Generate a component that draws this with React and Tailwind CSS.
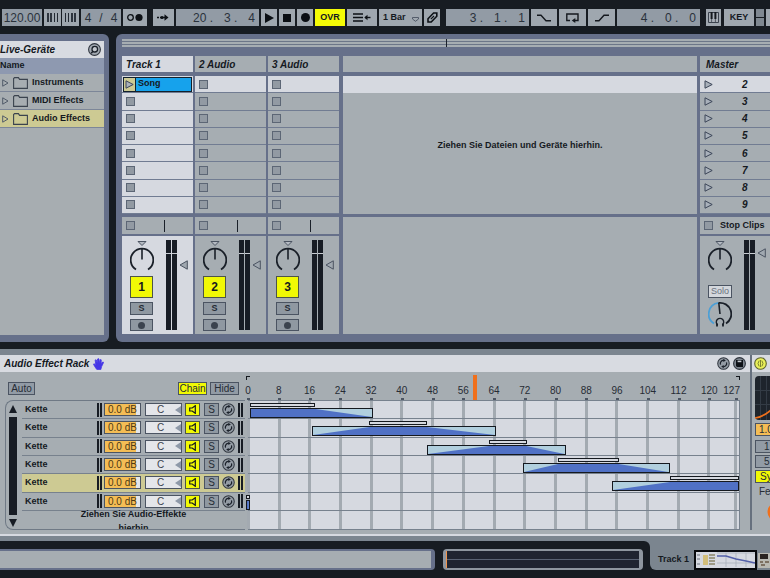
import { useState } from "react";

const devices = ["Instruments", "MIDI Effects", "Audio Effects"];
const tracks = [
  { id: 1, name: "Track 1" },
  { id: 2, name: "2 Audio" },
  { id: 3, name: "3 Audio" },
];
const scenes = [2, 3, 4, 5, 6, 7, 8, 9];

// start / end of the zone, fadeIn / fadeOut are the inner edges of the full level part
const chains = [
  { start: 0.4, fadeIn: 0.4, fadeOut: 17.5, end: 32.5 },
  { start: 16.6, fadeIn: 31.5, fadeOut: 46.6, end: 64.7 },
  { start: 46.7, fadeIn: 62.8, fadeOut: 72.7, end: 82.8 },
  { start: 71.8, fadeIn: 80.8, fadeOut: 96.8, end: 109.9 },
  { start: 94.8, fadeIn: 109.9, fadeOut: 128, end: 128, selected: true },
  { start: -0.5, fadeIn: -0.5, fadeOut: 0.5, end: 0.5 },
];
const ticks = [0, 8, 16, 24, 32, 40, 48, 56, 64, 72, 80, 88, 96, 104, 112, 120, 127];

const pct = (v) => `${(v / 128) * 100}%`;

const Cell = ({ label, className = "", children }) => (
  <button
    aria-label={label}
    className={`h-[17px] shrink-0 flex items-center justify-center bg-[#9fa7af] text-[#15191f] ${className}`}
  >
    {children}
  </button>
);

const Position = ({ label, parts, className = "" }) => (
  <div
    role="group"
    aria-label={label}
    className={`h-[17px] w-[83px] shrink-0 flex items-center justify-end gap-[11px] pr-1 bg-[#929ba5] text-[12px] text-[#2a323c] ${className}`}
  >
    {parts.map((p, i) => (
      <span key={i} className="whitespace-pre">{p}</span>
    ))}
  </div>
);

const StopSquare = () => (
  <button aria-label="Stop" className="block w-[9px] h-[9px] shrink-0 border border-[#5c6675] bg-[#929aa3]"></button>
);

const Launch = () => (
  <svg width="9" height="9" viewBox="0 0 9 9" className="shrink-0">
    <path d="M1 .8 8.2 4.5 1 8.2Z" fill="#a9b1bb" stroke="#3c4658" />
  </svg>
);

const Folder = () => (
  <svg width="15" height="12" viewBox="0 0 15 12" className="shrink-0">
    <path d="M.6 11.4V1.6L1.6.6H5.4L6.6 2.4H14.4V11.4Z" fill="none" stroke="#3b434e" strokeWidth="1.1" />
  </svg>
);

const PanKnob = () => (
  <svg width="24" height="32" viewBox="0 0 24 32" className="block">
    <path d="M8 1.5H16L12 5.5Z" fill="#b4bac2" stroke="#4b5462" />
    <path d="M6 29.5A11.3 11.3 0 1 1 18 29.5" fill="none" stroke="#1a2029" strokeWidth="1.8" />
    <path d="M12 8V19.5" stroke="#1a2029" strokeWidth="1.6" />
  </svg>
);

const CueKnob = () => (
  <svg width="24" height="29" viewBox="0 0 24 29" className="block">
    <path d="M6 23.5A11.2 11.2 0 0 1 10.5 2.9" fill="none" stroke="#4c9fd6" strokeWidth="1.8" />
    <path d="M10.5 2.9A11.2 11.2 0 0 1 18 23.5" fill="none" stroke="#1a2029" strokeWidth="1.8" />
    <path d="M10.8 3 12 14" stroke="#1a2029" strokeWidth="1.6" />
    <path d="M9.7 25A3.7 3.7 0 1 1 14.3 25" fill="none" stroke="#1a2029" strokeWidth="1.4" />
    <path d="M9 23.5V26.5M15 23.5V26.5" stroke="#1a2029" strokeWidth="1.8" />
  </svg>
);

const Meter = () => (
  <div className="flex gap-px h-[90px]">
    {[0, 1].map((m) => (
      <div key={m} className="w-[5px] bg-[#171c24] pt-[13px]">
        <div className="h-px bg-[#c9cdd3]"></div>
      </div>
    ))}
  </div>
);

const Volume = () => (
  <svg width="9" height="10" viewBox="0 0 9 10" className="block">
    <path d="M8.3 .8V9.2L1 5Z" fill="#a0a8b0" stroke="#4b5462" />
  </svg>
);

const HotSwap = ({ size = 13 }) => (
  <svg width={size} height={size} viewBox="0 0 14 14" className="shrink-0">
    <circle cx="7" cy="7" r="6.2" fill="#939ba4" stroke="#30363f" strokeWidth="1.1" />
    <path d="M3.8 8.2A3.3 3.3 0 0 1 7.4 3.7M10.2 5.8A3.3 3.3 0 0 1 6.6 10.3" fill="none" stroke="#1a2029" strokeWidth="1.3" />
    <path d="M6.8 2 9.5 3.8 6.8 5.4ZM7.2 8.6 4.5 10.2 7.2 12Z" fill="#1a2029" />
  </svg>
);

const Transport = () => (
  <header className="flex items-start h-[34px] pt-[9px] pl-[2px] overflow-hidden">
    <input
      aria-label="Tempo"
      defaultValue="120.00"
      className="h-[17px] w-[40px] shrink-0 bg-[#929ba5] text-center text-[12px] text-[#2a323c] outline-none"
    />
    <Cell label="Nudge down" className="ml-[2px] w-[17px]">
      <svg width="11" height="9" viewBox="0 0 11 9"><path d="M1 0V9M4 0V9" stroke="#222932" strokeWidth="1.8" /><path d="M7.5 0V9M10.5 0V9" stroke="#222932" /></svg>
    </Cell>
    <Cell label="Nudge up" className="ml-px w-[17px]">
      <svg width="11" height="9" viewBox="0 0 11 9"><path d="M.5 0V9M3.5 0V9" stroke="#222932" /><path d="M7 0V9M10 0V9" stroke="#222932" strokeWidth="1.8" /></svg>
    </Cell>
    <div className="ml-[2px] w-[40px] h-[17px] shrink-0 flex items-center justify-center gap-2 bg-[#929ba5] text-[12px] text-[#2a323c]">
      <span>4</span><span>/</span><span>4</span>
    </div>
    <Cell label="Metronome" className="ml-[2px] w-[24px]">
      <svg width="18" height="9" viewBox="0 0 18 9"><circle cx="4.5" cy="4.5" r="2.8" fill="none" stroke="#0d1116" strokeWidth="1.3" /><circle cx="13" cy="4.5" r="3.6" fill="#0d1116" /></svg>
    </Cell>
    <Cell label="Follow" className="ml-[6px] w-[21px]">
      <svg width="13" height="7" viewBox="0 0 13 7"><path d="M0 3.5H2M3 3.5H9" stroke="#0d1116" strokeWidth="1.4" /><circle cx="5" cy="3.5" r="1.6" fill="#0d1116" /><path d="M7.5 .3 11.5 3.5 7.5 6.7Z" fill="#0d1116" /></svg>
    </Cell>
    <Position label="Arrangement position" parts={["20 .", "3 .", "4"]} className="ml-[2px]" />
    <Cell label="Play" className="ml-[2px] w-[16px]">
      <svg width="9" height="10" viewBox="0 0 9 10"><path d="M0 0 9 5 0 10Z" fill="#0b0f14" /></svg>
    </Cell>
    <Cell label="Stop" className="ml-[2px] w-[16px]">
      <span className="w-2 h-2 bg-[#0b0f14]"></span>
    </Cell>
    <Cell label="Record" className="ml-[2px] w-[16px]">
      <span className="w-[9px] h-[9px] rounded-full bg-[#0b0f14]"></span>
    </Cell>
    <button className="ml-[2px] w-[30px] h-[17px] shrink-0 bg-[#f4fb06] text-[9px] font-bold">OVR</button>
    <Cell label="Back to arrangement" className="ml-[2px] w-[30px]">
      <svg width="18" height="9" viewBox="0 0 18 9"><path d="M0 1H10M0 4.5H10M0 8H10" stroke="#0d1116" strokeWidth="1.6" /><path d="M12 4.5H17.5" stroke="#0d1116" strokeWidth="1.4" /><path d="M14.5 1.8 11.3 4.5 14.5 7.2Z" fill="#0d1116" /></svg>
    </Cell>
    <div className="ml-[2px] w-[43px] h-[17px] shrink-0 flex items-center bg-[#9fa7af]">
      <select
        aria-label="Quantization"
        defaultValue="1 Bar"
        className="appearance-none min-w-0 flex-1 h-full pl-1 text-[9px] font-bold text-[#15191f] outline-none"
      >
        <option>1 Bar</option>
        <option>2 Bars</option>
      </select>
      <svg width="7" height="5" viewBox="0 0 7 5" className="mr-[3px] mt-1"><path d="M.5 .5H6.5V2L3.5 4.3 .5 2Z" fill="none" stroke="#4b5462" strokeWidth=".9" /></svg>
    </div>
    <Cell label="Draw mode" className="ml-[2px] w-[16px]">
      <svg width="11" height="11" viewBox="0 0 11 11"><path d="M1 10V6.8L6.6 1H9.8V4.2L4.2 10Z" fill="none" stroke="#0d1116" strokeWidth="1.6" /><path d="M3.8 7.2 7 4" stroke="#0d1116" strokeWidth="1.1" /></svg>
    </Cell>
    <Position label="Loop start" parts={["3 .", "1 .", "1"]} className="ml-[6px]" />
    <Cell label="Punch in" className="ml-[2px] w-[26px]">
      <svg width="14" height="8" viewBox="0 0 14 8"><path d="M0 1.2H4L9 6.8H14" fill="none" stroke="#15191f" strokeWidth="1.4" /></svg>
    </Cell>
    <Cell label="Loop" className="ml-[2px] w-[27px]">
      <svg width="13" height="10" viewBox="0 0 13 10"><path d="M4 7.5H.8V1H12V7.5H8" fill="none" stroke="#15191f" strokeWidth="1.4" /><path d="M9.3 5 5.8 7.5 9.3 10Z" fill="#15191f" /></svg>
    </Cell>
    <Cell label="Punch out" className="ml-[2px] w-[27px]">
      <svg width="14" height="8" viewBox="0 0 14 8"><path d="M0 6.8H4L9 1.2H14" fill="none" stroke="#15191f" strokeWidth="1.4" /></svg>
    </Cell>
    <Position label="Loop length" parts={["4 .", "0 .", "0"]} className="ml-[2px]" />
    <Cell label="Computer keyboard" className="ml-[6px] w-[15px]">
      <svg width="11" height="11" viewBox="0 0 11 11"><path d="M.5 .5H10.5V10.5H.5Z" fill="#a9b0b8" stroke="#3b434e" /><path d="M3.6 0V7M7.4 0V7" stroke="#15191f" strokeWidth="2" /><path d="M3.6 7V10.5M7.4 7V10.5" stroke="#3b434e" strokeWidth=".8" /></svg>
    </Cell>
    <Cell className="ml-[3px] w-[30px] text-[9px] font-bold">KEY</Cell>
    <div className="ml-[2px] shrink-0 flex flex-col gap-px">
      <span className="w-2 h-2 bg-[#7f8891]"></span>
      <span className="w-2 h-2 bg-[#7f8891]"></span>
    </div>
    <Cell label="MIDI" className="ml-[2px] w-[30px]" />
  </header>
);

const Browser = () => {
  const [selected, setSelected] = useState("Audio Effects");
  return (
    <aside className="w-[109px] shrink-0 flex flex-col pt-[7px] pr-[5px] pb-[7px] bg-[#66708a] rounded-r-md">
      <div className="h-[17px] flex items-center justify-between pr-[3px] bg-[#d8dbe1]">
        <h2 className="text-[10px] font-bold italic">Live-Geräte</h2>
        <svg width="13" height="13" viewBox="0 0 13 13">
          <circle cx="6.5" cy="6.5" r="5.9" fill="#a4abb3" stroke="#30363f" strokeWidth="1.1" />
          <circle cx="6.8" cy="6.2" r="2.8" fill="#c4c8ce" stroke="#1a2029" strokeWidth="1.3" />
          <path d="M5 8.3 3.2 10.2" stroke="#1a2029" strokeWidth="1.5" />
        </svg>
      </div>
      <div className="h-[16px] flex items-center bg-[#8e99b0] text-[9px] font-bold">Name</div>
      <ul className="flex-1 bg-[#a7adb1]">
        {devices.map((d) => (
          <li key={d}>
            <button
              onClick={() => setSelected(d)}
              className={`w-full h-[18px] flex items-center border-b border-[#7c8698] pl-[2px] text-[9px] font-bold ${
                d === selected ? "bg-[#cdca93]" : ""
              }`}
            >
              <svg width="7" height="8" viewBox="0 0 7 8" className="mr-1"><path d="M.7 .8 6 4 .7 7.2Z" fill="none" stroke="#515b69" /></svg>
              <Folder />
              <span className="ml-1">{d}</span>
            </button>
          </li>
        ))}
      </ul>
    </aside>
  );
};

const Track = ({ track }) => {
  const first = track.id === 1;
  return (
    <section aria-label={track.name} className="w-[71px] shrink-0 flex flex-col">
      <h3 className={`h-[16px] flex items-center pl-1 mb-1 text-[10px] font-bold italic ${first ? "bg-[#d6d9e0]" : "bg-[#a6adb2]"}`}>
        {track.name}
      </h3>
      <div className="h-[138px] flex flex-col">
        {scenes.map((s, i) => (
          <div
            key={s}
            className={`flex-1 flex items-center border-b border-[#717c92] ${first || i === 0 ? "bg-[#d6d9e0]" : "bg-[#a6adb2]"}`}
          >
            {first && i === 0 ? (
              <button className="flex-1 h-[15px] mx-px flex items-center border border-[#12202c] bg-[#16a2ec] text-[9px] font-bold">
                <span className="w-3 h-full flex items-center justify-center bg-[#cdca93] border-r border-[#12202c]">
                  <Launch />
                </span>
                <span className="pl-[2px]">Song</span>
              </button>
            ) : (
              <div className="pl-1"><StopSquare /></div>
            )}
          </div>
        ))}
      </div>
      <div className="h-[17px] mt-[3px] mb-[2px] flex items-center pl-1 bg-[#a6adb2]">
        <StopSquare />
        <span className="ml-[29px] w-px h-3 bg-[#1a2029]"></span>
      </div>
      <div className={`h-[98px] flex items-start pt-1 pl-2 ${first ? "bg-[#d6d9e0]" : "bg-[#a6adb2]"}`}>
        <div className="w-6 flex flex-col gap-1">
          <PanKnob />
          <button className="w-[23px] h-[22px] border border-[#4d5548] bg-[#f1f905] text-[12px] font-bold leading-5">{track.id}</button>
          <button className="w-[23px] h-[13px] border border-[#4b5462] bg-[#8f98a1] text-[9px] font-bold leading-[11px] text-[#262c35]">S</button>
          <button aria-label="Arm" className="w-[23px] h-[12px] flex items-center justify-center border border-[#4b5462] bg-[#8f98a1]">
            <span className="w-[7px] h-[7px] rounded-full bg-[#3b434e]"></span>
          </button>
        </div>
        <div className="ml-3"><Meter /></div>
        <div className="ml-[2px] mt-5"><Volume /></div>
      </div>
    </section>
  );
};

const Master = () => (
  <section aria-label="Master" className="w-[70px] shrink-0 flex flex-col">
    <h3 className="h-[16px] flex items-center pl-[6px] mb-1 bg-[#a6adb2] text-[10px] font-bold italic">Master</h3>
    <div className="h-[138px] flex flex-col">
      {scenes.map((s, i) => (
        <button
          key={s}
          className={`flex-1 flex items-center pl-1 border-b border-[#717c92] text-[10px] font-bold italic ${i === 0 ? "bg-[#d6d9e0]" : "bg-[#a6adb2]"}`}
        >
          <Launch />
          <span className="ml-[29px]">{s}</span>
        </button>
      ))}
    </div>
    <div className="h-[17px] mt-[3px] mb-[2px] flex items-center pl-1 bg-[#a6adb2]">
      <StopSquare />
      <span className="ml-[7px] text-[9px] font-bold whitespace-nowrap">Stop Clips</span>
    </div>
    <div className="h-[98px] flex items-start pt-1 pl-2 bg-[#a6adb2]">
      <div className="w-6">
        <PanKnob />
        <button className="mt-[13px] mb-[2px] w-6 h-[13px] flex items-center justify-center border border-[#4b5462] bg-[#d3d7dc] text-[9px] text-[#69717c]">Solo</button>
        <CueKnob />
      </div>
      <div className="ml-3"><Meter /></div>
      <div className="ml-[2px] mt-2"><Volume /></div>
    </div>
  </section>
);

const Session = () => (
  <main className="flex-1 min-w-0 pt-[5px] pb-2 pl-[6px] bg-[#66708a] rounded-l-md overflow-hidden">
    <div className="h-2 mb-[9px] flex flex-col justify-between relative bg-[#a6adb2]">
      <div className="h-px mt-[2px] bg-[#6c7688]"></div>
      <div className="h-px mb-[2px] bg-[#6c7688]"></div>
      <span className="absolute left-1/2 top-0 w-px h-2 bg-[#1a2029]"></span>
    </div>
    <div className="flex gap-[2px]">
      {tracks.map((t) => (
        <Track key={t.id} track={t} />
      ))}
      <div className="flex-1 min-w-0 flex flex-col pl-[2px] pr-px">
        <div className="h-[16px] mb-1 bg-[#a6adb2]"></div>
        <div className="h-[17px] bg-[#d6d9e0]"></div>
        <div className="h-[121px] pt-[46px] bg-[#a6adb2] text-center text-[9px] font-bold">
          Ziehen Sie Dateien und Geräte hierhin.
        </div>
        <div className="flex-1 mt-[3px] bg-[#a6adb2]"></div>
      </div>
      <Master />
    </div>
  </main>
);

const MiniMeter = () => (
  <span className="flex gap-px h-[14px] shrink-0">
    <span className="w-[2px] bg-[#171c24]"></span>
    <span className="w-[2px] bg-[#171c24]"></span>
  </span>
);

const ChainRow = ({ chain }) => (
  <div className={`flex-1 flex items-center pl-[3px] border-b border-[#77818d] text-[9px] ${chain.selected ? "bg-[#cdca93]" : ""}`}>
    <span className="w-[72px] font-bold">Kette</span>
    <MiniMeter />
    <input
      aria-label="Chain volume"
      defaultValue="0.0 dB"
      className="ml-[2px] w-[37px] h-[13px] border border-[#4b5462] bg-linear-to-r from-[#f4bd55] from-88% to-[#e4e6ea] to-88% text-center text-[10px] text-[#4d3a16] outline-none"
    />
    <span className="ml-1 w-[37px] h-[13px] flex items-center border border-[#4b5462] bg-[#e4e6ea]">
      <input aria-label="Chain pan" defaultValue="C" className="min-w-0 flex-1 text-center text-[10px] text-[#3b434e] outline-none" />
      <svg width="6" height="8" viewBox="0 0 6 8"><path d="M6 0V8L0 4Z" fill="#8e99a8" /></svg>
    </span>
    <button aria-label="Chain activator" className="ml-[3px] w-[15px] h-[13px] flex items-center justify-center border border-[#4d5548] bg-[#f1f905]">
      <svg width="8" height="9" viewBox="0 0 8 9"><path d="M.7 3H3.2L6.3 .7V8.3L3.2 6H.7Z" fill="none" stroke="#15191f" strokeWidth="1.2" /></svg>
    </button>
    <button className="ml-1 w-[15px] h-[13px] border border-[#4b5462] bg-[#8f98a1] text-[10px] leading-[11px] text-[#262c35]">S</button>
    <button aria-label="Hot-swap" className="ml-[3px]"><HotSwap /></button>
    <span className="ml-[3px]"><MiniMeter /></span>
  </div>
);

const ZoneBar = ({ chain }) => {
  const { start, end, fadeIn, fadeOut } = chain;
  return (
    <div className="flex-1 relative border-b border-[#77818d]">
      <div
        className="absolute top-[2px] h-1 border border-[#15191f] bg-[#d6d9e0]"
        style={{ left: pct(fadeIn), width: pct(fadeOut - fadeIn) }}
      ></div>
      <div
        className="absolute top-[7px] h-[10px] border border-[#15191f] bg-[#b1cfde]"
        style={{ left: pct(start), width: pct(end - start) }}
      >
        <svg className="block w-full h-full" viewBox={`0 0 ${end - start} 10`} preserveAspectRatio="none">
          <path
            d={`M0 10 L${fadeIn - start} 0 H${fadeOut - start} L${end - start} 10 Z`}
            fill="#5071c5"
          />
        </svg>
      </div>
    </div>
  );
};

const Rack = () => {
  const [view, setView] = useState("Chain");
  return (
    <section aria-label="Audio Effect Rack" className="flex-1 min-w-0 bg-[#a6adb2]">
      <div className="h-[17px] flex items-center pl-1 pr-1 bg-[#d8dbe1]">
        <h2 className="text-[10px] font-bold italic">Audio Effect Rack</h2>
        <svg width="11" height="12" viewBox="0 0 11 12" className="ml-[4px]">
          <path d="M3.2 10.8 1 7.2Q0 5.6 1.2 5.8L2.8 7.2 2.2 2.3Q2.4 1.2 3.3 2L4.2 5 4.6 1Q5.2 0 6 1L6.2 5 7.2 1.8Q8.2 1 8.3 2.2L8 5.6 9.6 4Q11 3.8 10.3 5L8.6 8.6 7.8 11.6H4Z" fill="#4637e6" stroke="#4637e6" strokeWidth=".8" />
        </svg>
        <span className="flex-1"></span>
        <button aria-label="Hot-swap preset" className="mr-[3px]"><HotSwap /></button>
        <button aria-label="Save preset">
          <svg width="13" height="13" viewBox="0 0 13 13" className="block">
            <circle cx="6.5" cy="6.5" r="5.9" fill="#7d858e" stroke="#30363f" strokeWidth="1.1" />
            <path d="M3 3H10V10H4L3 9Z" fill="#0d1116" />
            <path d="M4.6 3.6H8.4V5.2H4.6Z" fill="#c4c8ce" />
          </svg>
        </button>
      </div>
      <div className="flex pl-[5px] pr-[10px]">
        <div className="w-[240px] shrink-0">
          <div className="h-[28px] flex items-center pl-[3px] pt-[5px] pr-[6px] text-[10px]">
            <button className="w-[27px] h-[13px] flex items-center justify-center border border-[#4b5462] bg-[#929ba5] text-[#262c35]">Auto</button>
            <span className="flex-1"></span>
            <button
              onClick={() => setView("Chain")}
              className={`w-[29px] h-[13px] mr-[3px] flex items-center justify-center border border-[#4b5462] text-[#262c35] ${view === "Chain" ? "bg-[#f1f905]" : "bg-[#929ba5]"}`}
            >
              Chain
            </button>
            <button
              onClick={() => setView("Hide")}
              className={`w-[29px] h-[13px] flex items-center justify-center border border-[#4b5462] text-[#262c35] ${view === "Hide" ? "bg-[#f1f905]" : "bg-[#929ba5]"}`}
            >
              Hide
            </button>
          </div>
          <div className="h-[130px] flex border border-r-0 border-[#6f7985] rounded-l-lg overflow-hidden">
            <div className="w-4 shrink-0 flex flex-col items-center pt-1 pb-[2px] pr-[2px] gap-1">
              <svg width="8" height="8" viewBox="0 0 8 8"><path d="M4 0 8 8H0Z" fill="#171c24" /></svg>
              <div className="w-2 flex-1 bg-[#171c24]"></div>
              <svg width="8" height="8" viewBox="0 0 8 8"><path d="M0 0H8L4 8Z" fill="#171c24" /></svg>
            </div>
            <div className="flex-1 min-w-0">
              <div className="h-[110px] flex flex-col">
                {chains.map((c, i) => (
                  <ChainRow key={i} chain={c} />
                ))}
              </div>
              <p className="px-[52px] -mt-[4px] text-center text-[9px] leading-[14px] font-bold">Ziehen Sie Audio-Effekte hierhin</p>
            </div>
          </div>
        </div>

        <div className="flex-1 min-w-0 pl-[3px]">
          <div className="h-[28px] relative text-[10px] text-[#262c35]">
            <span className="absolute -left-[2px] top-1 w-1 h-1 border-l border-t border-[#15191f]"></span>
            <span className="absolute right-0 top-1 w-1 h-1 border-r border-t border-[#15191f]"></span>
            {ticks.map((t) => (
              <span key={t}>
                <span
                  className={`absolute top-[12px] leading-[14px] ${t === 127 ? "-translate-x-full" : "-translate-x-1/2"}`}
                  style={{ left: t === 127 ? "100%" : pct(t) }}
                >
                  {t}
                </span>
                <span className="absolute bottom-0 w-[3px] h-[2px] -ml-px bg-[#4b5462]" style={{ left: pct(t) }}></span>
              </span>
            ))}
            <span className="absolute top-[3px] w-1 h-[25px] bg-[#f0701c]" style={{ left: pct(58.6) }}></span>
          </div>
          <div className="h-[130px] relative border-y border-r border-[#77818d] bg-[#d6d9e0]">
            {ticks.map((t) => (
              <span key={t} className="absolute inset-y-0 w-[3px] -ml-px bg-[#a3aab1]" style={{ left: pct(t) }}></span>
            ))}
            <div className="h-[110px] flex flex-col">
              {chains.map((c, i) => (
                <ZoneBar key={i} chain={c} />
              ))}
            </div>
          </div>
        </div>
      </div>
    </section>
  );
};

const NextDevice = () => (
  <section aria-label="Filter Delay" className="w-[20px] shrink-0 overflow-hidden border-l-2 border-[#66707e] bg-[#a6adb2]">
    <div className="w-20">
      <div className="h-[17px] flex items-center pl-[2px] bg-[#d8dbe1]">
        <button aria-label="Device on">
          <svg width="13" height="13" viewBox="0 0 13 13" className="block">
            <circle cx="6.5" cy="6.5" r="5.8" fill="#e9f05a" stroke="#5d6330" strokeWidth="1.1" />
            <path d="M5.2 3.6Q2.8 6.5 5.2 9.4M7.8 3.6Q10.2 6.5 7.8 9.4" fill="none" stroke="#7d8430" />
            <path d="M6.5 3V10" stroke="#7d8430" />
          </svg>
        </button>
      </div>
      <div className="pl-[3px] pt-1 text-[10px] text-[#262c35]">
        <svg width="60" height="44" viewBox="0 0 60 44" className="block">
          <rect width="60" height="44" rx="4" fill="#1e242c" />
          <path d="M5.5 0V44M11.5 0V44M17.5 0V44M0 14.5H60M0 28.5H60" stroke="#333b45" />
          <path d="M0 42Q8 41 16 34Q26 24 40 22" fill="none" stroke="#f0701c" strokeWidth="1.6" />
        </svg>
        <div className="mt-[3px] flex flex-col">
          <input aria-label="Frequency" defaultValue="1.00 k" className="h-[13px] pl-[3px] border border-[#4b5462] bg-[#f4bd55] outline-none" />
          <button className="mt-1 h-[13px] pl-2 text-left leading-[11px] border border-[#4b5462] bg-[#929ba5]">1</button>
          <button className="mt-[2px] h-[13px] pl-2 text-left leading-[11px] border border-[#4b5462] bg-[#929ba5]">5</button>
          <button className="mt-[2px] h-[13px] pl-1 text-left leading-[11px] border border-[#4b5462] bg-[#f1f905]">Sync</button>
          <span className="mt-[2px] pl-1 leading-[14px]">Feedback</span>
          <svg width="24" height="20" viewBox="0 0 24 20" className="mt-1 ml-3"><circle cx="10" cy="9" r="8" fill="none" stroke="#f0701c" strokeWidth="3" /></svg>
        </div>
      </div>
    </div>
  </section>
);

const StatusBar = () => (
  <footer className="bg-[#7b858f]">
    <div className="flex">
      <div className="flex-1 min-w-0 pt-2 flex gap-2 pr-[7px] bg-[#171c22] rounded-tr-md">
        <div className="flex-1 h-[21px] border-2 border-l-0 border-r-4 border-[#66708a] rounded-r bg-[#a6adb2]"></div>
        <div className="w-[200px] h-[21px] shrink-0 p-[2px] pl-[3px] pr-1 rounded bg-[#8e969f]">
          <div className="h-full flex flex-col justify-center border-l border-[#f0944c] bg-[#1f2430]">
            <div className="h-px bg-[#596273]"></div>
          </div>
        </div>
      </div>
      <div className="w-[120px] shrink-0 bg-[#171c22]">
        <div className="h-[29px] flex items-center pt-2 pl-2 bg-[#7b858f] rounded-bl-md">
          <span className="w-9 text-[9px] font-bold whitespace-nowrap">Track 1</span>
          <svg width="76" height="20" viewBox="0 0 76 20" className="shrink-0">
            <rect x="1" y="1" width="61" height="18" fill="#d6d9e0" stroke="#07090c" strokeWidth="2" />
            <path d="M3 5H6M3 9H6M3 14H6" stroke="#6d7580" />
            <rect x="9" y="5" width="5" height="10" fill="#d3be7a" />
            <path d="M15 5H21M15 8H21M15 11H21M15 14H21" stroke="#8a8568" strokeWidth="1.5" />
            <path d="M23 3H61M23 13H61M32 3V17M42 3V17M52 3V17" stroke="#aab1bb" strokeWidth=".8" />
            <path d="M23 6 32 6 42 9 52 11 61 13" fill="none" stroke="#5360a8" strokeWidth="1.5" />
            <rect x="64" y="3" width="12" height="15" fill="#b9b9b2" />
            <rect x="66" y="4" width="8" height="5" fill="#2a2320" />
            <path d="M66 12H69M71 12H75M67 15H71" stroke="#695a48" strokeWidth="1.4" />
          </svg>
        </div>
      </div>
    </div>
    <div className="h-[7px] bg-[#171c22]"></div>
  </footer>
);

const App = () => (
  <div className="min-h-screen overflow-hidden bg-[#171c22] text-[#15191f] font-['Liberation_Sans',Arial,sans-serif]">
    <Transport />
    <div className="flex gap-[7px]">
      <Browser />
      <Session />
    </div>
    <div className="mt-[7px] pt-[6px] bg-[#7b858f]">
      <div className="flex bg-[#a6adb2] pb-1 border-b-2 border-[#d6d9e0]">
        <Rack />
        <NextDevice />
      </div>
      <div className="h-[5px]"></div>
    </div>
    <StatusBar />
  </div>
);

export default App;
